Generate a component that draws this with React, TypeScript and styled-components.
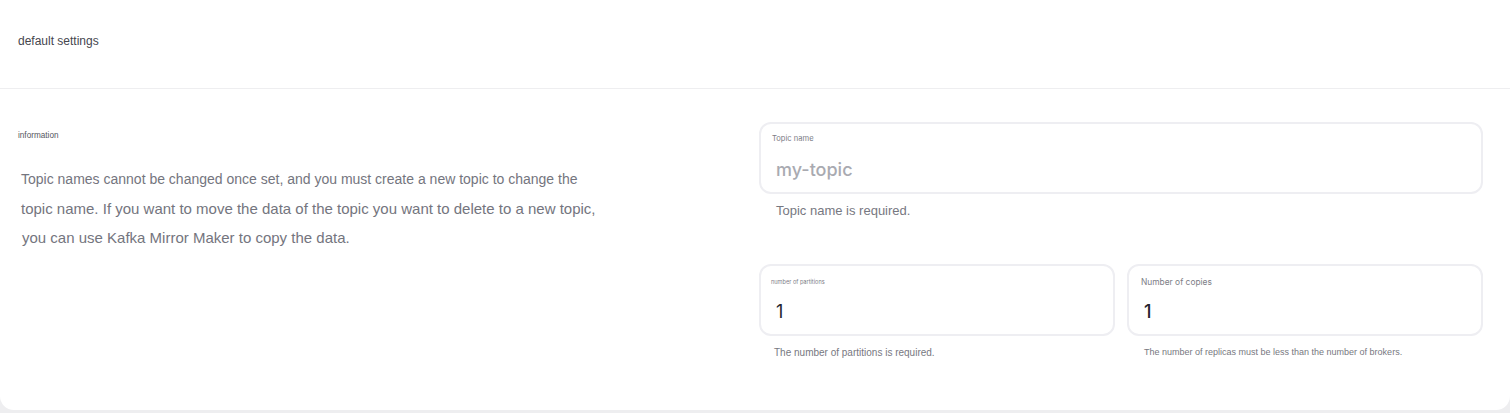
import styled, { createGlobalStyle } from "styled-components";

const GlobalStyle = createGlobalStyle`
  html, body {
    margin: 0;
    padding: 0;
    background: #eeeef0;
  }
  * {
    box-sizing: border-box;
  }
`;

const Card = styled.div`
  width: 1510px;
  height: 410px;
  background: #ffffff;
  border-radius: 0 0 14px 14px;
  font-family: "Liberation Sans", Arial, sans-serif;
`;

const Header = styled.header`
  height: 89px;
  padding: 0 18px;
  display: flex;
  align-items: center;
  border-bottom: 1px solid #eeeef0;
`;

const HeaderTitle = styled.h2`
  margin: 0 0 7px;
  font-size: 12px;
  font-weight: 400;
  color: #45464e;
`;

const Body = styled.div`
  display: grid;
  grid-template-columns: 741px 724px;
  padding: 33px 0 0 18px;
`;

const InfoColumn = styled.section`
  display: flex;
  flex-direction: column;
`;

const InfoTitle = styled.h3`
  margin: 9px 0 0;
  font-size: 8.2px;
  line-height: 10px;
  font-weight: 400;
  color: #55565e;
`;

const InfoText = styled.div`
  margin: 24px 0 0 3px;
  color: #74757e;
`;

const InfoLine = styled.p<{ $size: number; $indent?: number }>`
  margin: 0 0 0 ${(props) => props.$indent ?? 0}px;
  font-size: ${(props) => props.$size}px;
  line-height: 29px;
  white-space: nowrap;
`;

const FormColumn = styled.section`
  display: flex;
  flex-direction: column;
`;

const TopicBlock = styled.div`
  height: 142px;
`;

const FieldRow = styled.div`
  display: grid;
  grid-template-columns: 1fr 1fr;
  gap: 12px;
`;

const Field = styled.div`
  height: 72px;
  padding: 9px 12px 0 11px;
  border: 2px solid #eeeef2;
  border-radius: 12px;
  background: #ffffff;
`;

const FieldLabel = styled.label<{ $size: number; $indent?: number; $top?: number }>`
  display: block;
  height: 12px;
  margin: ${(props) => props.$top ?? 0}px 0 ${(props) => -(props.$top ?? 0)}px
    ${(props) => props.$indent ?? 0}px;
  font-family: "Inter", "Liberation Sans", sans-serif;
  font-size: ${(props) => props.$size}px;
  line-height: 12px;
  color: #7c7d86;
  white-space: nowrap;
`;

const FieldValue = styled.div<{ $muted?: boolean; $strong?: boolean }>`
  margin: 13px 0 0 4px;
  font-family: "Inter", "Liberation Sans", sans-serif;
  font-size: 18px;
  line-height: 24px;
  font-weight: ${(props) => (props.$muted || props.$strong ? 500 : 400)};
  color: ${(props) => (props.$muted ? "#a9aab1" : "#25262e")};
`;

const Helper = styled.p<{ $size: number; $indent: number }>`
  margin: 9px 0 0 ${(props) => props.$indent}px;
  font-size: ${(props) => props.$size}px;
  line-height: 15px;
  color: #777881;
  white-space: nowrap;
`;

export default function App() {
  return (
    <>
      <GlobalStyle />
      <Card>
        <Header>
          <HeaderTitle>default settings</HeaderTitle>
        </Header>
        <Body>
          <InfoColumn>
            <InfoTitle>information</InfoTitle>
            <InfoText>
              <InfoLine $size={14}>
                Topic names cannot be changed once set, and you must create a
                new topic to change the
              </InfoLine>
              <InfoLine $size={15}>
                topic name. If you want to move the data of the topic you want
                to delete to a new topic,
              </InfoLine>
              <InfoLine $size={15} $indent={1}>
                you can use Kafka Mirror Maker to copy the data.
              </InfoLine>
            </InfoText>
          </InfoColumn>
          <FormColumn>
            <TopicBlock>
              <Field>
                <FieldLabel $size={7.6}>Topic name</FieldLabel>
                <FieldValue $muted>my-topic</FieldValue>
              </Field>
              <Helper $size={13} $indent={17}>
                Topic name is required.
              </Helper>
            </TopicBlock>
            <FieldRow>
              <div>
                <Field>
                  <FieldLabel $size={5.6} $indent={-1} $top={1}>
                    number of partitions
                  </FieldLabel>
                  <FieldValue>1</FieldValue>
                </Field>
                <Helper $size={10} $indent={15}>
                  The number of partitions is required.
                </Helper>
              </div>
              <div>
                <Field>
                  <FieldLabel $size={8.4} $indent={1} $top={1}>
                    Number of copies
                  </FieldLabel>
                  <FieldValue $strong>1</FieldValue>
                </Field>
                <Helper $size={9} $indent={17}>
                  The number of replicas must be less than the number of brokers.
                </Helper>
              </div>
            </FieldRow>
          </FormColumn>
        </Body>
      </Card>
    </>
  );
}
